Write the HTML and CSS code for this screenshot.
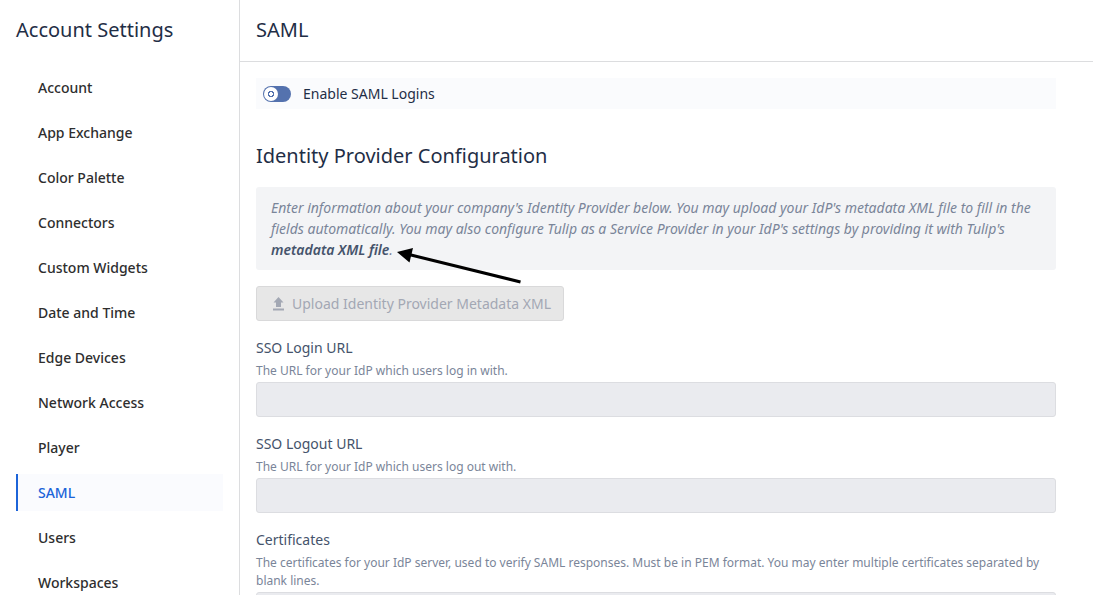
FILE: index.html
```html
<!DOCTYPE html>
<html lang="en">
<head>
<meta charset="utf-8">
<meta name="viewport" content="width=device-width, initial-scale=1">
<title>Account Settings - SAML</title>
<link rel="stylesheet" href="styles.css">
</head>
<body>
<div class="layout">
  <aside class="sidebar">
    <h2 class="title">Account Settings</h2>
    <nav class="nav">
      <a class="nav-item" href="#account">Account</a>
      <a class="nav-item" href="#app-exchange">App Exchange</a>
      <a class="nav-item" href="#color-palette">Color Palette</a>
      <a class="nav-item" href="#connectors">Connectors</a>
      <a class="nav-item" href="#custom-widgets">Custom Widgets</a>
      <a class="nav-item" href="#date-and-time">Date and Time</a>
      <a class="nav-item" href="#edge-devices">Edge Devices</a>
      <a class="nav-item" href="#network-access">Network Access</a>
      <a class="nav-item" href="#player">Player</a>
      <a class="nav-item active" href="#saml" aria-current="page">SAML</a>
      <a class="nav-item" href="#users">Users</a>
      <a class="nav-item" href="#workspaces">Workspaces</a>
    </nav>
  </aside>
  <main class="main">
    <header class="header"><h1 class="title">SAML</h1></header>
    <form class="content">
      <label class="toggle-row" for="enable-saml">
        <input class="toggle" type="checkbox" role="switch" id="enable-saml">
        <span>Enable SAML Logins</span>
      </label>
      <h2 class="title section-title">Identity Provider Configuration</h2>
      <div class="info">
        <p class="info-text">Enter information about your company's Identity Provider below. You may upload your IdP's metadata XML file to fill in the fields automatically. You may also configure Tulip as a Service Provider in your IdP's settings by providing it with Tulip's <a class="info-link" href="#metadata">metadata XML file</a>.</p>
        <svg class="arrow" width="126" height="38" viewBox="0 0 126 38" aria-hidden="true">
          <path d="M123.500 34 12 6.500" stroke="#000" stroke-width="3" fill="none"/>
          <path d="M0 4 16 0 12.500 14.500Z" fill="#000"/>
        </svg>
      </div>
      <button class="upload" type="button" disabled>
        <svg class="upload-icon" width="11" height="14" viewBox="0 0 11 14" aria-hidden="true">
          <path d="M5.500 0 10.500 5.500H8V10H3V5.500H.5ZM0 11.500H11V13.500H0Z" fill="currentColor"/>
        </svg>
        <span>Upload Identity Provider Metadata XML</span>
      </button>
      <div class="field">
        <label class="label" for="login-url">SSO Login URL</label>
        <p class="help" id="login-help">The URL for your IdP which users log in with.</p>
        <input class="control" type="url" id="login-url" aria-describedby="login-help" disabled>
      </div>
      <div class="field">
        <label class="label" for="logout-url">SSO Logout URL</label>
        <p class="help" id="logout-help">The URL for your IdP which users log out with.</p>
        <input class="control" type="url" id="logout-url" aria-describedby="logout-help" disabled>
      </div>
      <div class="field">
        <label class="label" for="certs">Certificates</label>
        <p class="help" id="certs-help">The certificates for your IdP server, used to verify SAML responses. Must be in PEM format. You may enter multiple certificates separated by blank lines.</p>
        <textarea class="control" id="certs" rows="5" aria-describedby="certs-help" disabled></textarea>
      </div>
    </form>
  </main>
</div>
</body>
</html>
```

FILE: styles.css
```css
* {
  box-sizing: border-box;
}

body {
  margin: 0;
  background: #fff;
  color: #1f2e46;
  font-family: "Noto Sans", sans-serif;
  font-size: 14px;
  line-height: 21px;
}

h1, h2, p {
  margin: 0;
}

.layout {
  display: flex;
  height: 100vh;
  overflow: hidden;
}

.title {
  font-size: 20px;
  font-weight: 400;
  line-height: 28px;
}

.sidebar {
  flex: 0 0 240px;
  padding: 16px;
  border-right: 1px solid #dcdddf;
}

.nav {
  display: flex;
  flex-direction: column;
  gap: 8px;
  margin-top: 25px;
}

.nav-item {
  padding: 8px 20px;
  border-left: 2px solid transparent;
  color: #2e2e2e;
  font-weight: 500;
  text-decoration: none;
}

.nav-item.active {
  border-left-color: #1c64d9;
  background: #fafbfe;
  color: #1c64d9;
}

.main {
  flex: 1;
  min-width: 0;
}

.header {
  padding: 16px 16px 17px;
  border-bottom: 1px solid #dcdddf;
}

.content {
  display: flex;
  flex-direction: column;
  gap: 16px;
  max-width: 832px;
  padding: 16px;
}

.toggle-row {
  display: flex;
  align-items: center;
  gap: 12px;
  height: 31px;
  padding: 0 7px;
  background: #fafbfd;
}

.toggle {
  appearance: none;
  display: flex;
  width: 28px;
  height: 16px;
  margin: 0;
  padding: 1px;
  border-radius: 8px;
  background: #5472ae;
}

.toggle::before {
  content: "";
  width: 14px;
  height: 14px;
  border-radius: 7px;
  background: radial-gradient(circle, #fff 0 2px, #5472ae 2px 3px, #fff 3px);
}

.toggle:checked {
  justify-content: flex-end;
}

.section-title {
  margin: 17px 0 1px;
}

.info {
  position: relative;
  padding: 10px 15px;
  border-radius: 3px;
  background: #f3f4f6;
  color: #7a8599;
  font-style: italic;
}

.info-link {
  color: #45536b;
  font-weight: 600;
  text-decoration: none;
}

.arrow {
  position: absolute;
  left: 141px;
  top: 61px;
}

.upload {
  display: flex;
  align-items: center;
  align-self: flex-start;
  gap: 8px;
  height: 35px;
  padding: 0 12px 0 16px;
  border: 1px solid #d9d9da;
  border-radius: 3px;
  background: #e7e7e7;
  color: #a3a8b4;
  font: 14px/21px "Noto Sans", sans-serif;
}

.field {
  display: flex;
  flex-direction: column;
}

.label {
  margin-bottom: 3px;
  color: #45536b;
  line-height: 22px;
}

.help {
  margin-bottom: 2px;
  color: #7a8599;
  font-size: 12px;
  line-height: 18px;
}

.control {
  width: 100%;
  min-height: 35px;
  padding: 6px 12px;
  border: 1px solid #dcdde1;
  border-radius: 3px;
  background: #eaebef;
  color: #45536b;
  font: 14px/21px "Noto Sans", sans-serif;
  resize: none;
}
```
